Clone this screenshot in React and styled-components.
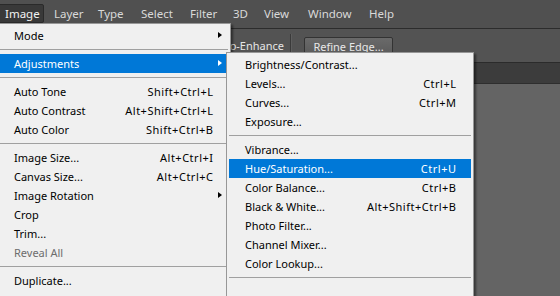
import React from 'react'
import styled, { createGlobalStyle } from 'styled-components'

const GlobalStyle = createGlobalStyle`
  html, body {
    margin: 0;
    padding: 0;
    background: #646464;
    overflow: hidden;
  }
  body {
    font-family: "Noto Sans", "Open Sans", "Liberation Sans", sans-serif;
  }
`

const Screen = styled.div`
  position: relative;
  width: 560px;
  height: 296px;
  overflow: hidden;
  display: flex;
  flex-direction: column;
  background: #646464;
`

const MenuBar = styled.div`
  display: flex;
  height: 28px;
  margin-left: -5px;
  background: #505050;
  border-bottom: 1px solid #2c2c2c;
  flex-shrink: 0;
`

const MenuTitle = styled.div`
  box-sizing: border-box;
  width: ${p => p.$w}px;
  height: 19px;
  margin-top: 4px;
  padding-left: 9px;
  display: flex;
  align-items: center;
  font-size: 11.5px;
  color: ${p => (p.$open ? '#f2f2f2' : '#d9d9d9')};
  background: ${p => (p.$open ? '#393939' : 'transparent')};
  border: 1px solid ${p => (p.$open ? '#2a2a2a' : 'transparent')};
  border-radius: 2px;
  white-space: nowrap;
`

const OptionsBar = styled.div`
  display: flex;
  align-items: center;
  height: 33px;
  background: #535353;
  border-bottom: 1px solid #2b2b2b;
  flex-shrink: 0;
`

const OptionGroup = styled.div`
  width: 284px;
  display: flex;
  justify-content: flex-end;
  align-items: center;
  gap: 5px;
  font-size: 11px;
  color: #e6e6e6;
`

const Check = styled.span`
  width: 11px;
  height: 11px;
  background: #e8e8e8;
  border: 1px solid #2e2e2e;
`

const Divider = styled.div`
  width: 1px;
  height: 24px;
  margin-left: 6px;
  background: #3a3a3a;
  box-shadow: 1px 0 0 #5e5e5e;
`

const ToolButton = styled.div`
  box-sizing: border-box;
  margin-left: 13px;
  margin-top: 1px;
  width: 89px;
  height: 19px;
  display: flex;
  align-items: center;
  justify-content: center;
  font-size: 11px;
  color: #e8e8e8;
  background: linear-gradient(#6a6a6a, #5a5a5a);
  border: 1px solid #333333;
  border-radius: 2px;
`

const TabStrip = styled.div`
  height: 20px;
  background: #3c3c3c;
  border-bottom: 1px solid #2e2e2e;
  flex-shrink: 0;
`

const Canvas = styled.div`
  flex: 1;
  background: #646464;
`

const Dropdown = styled.div`
  position: absolute;
  left: ${p => p.$left}px;
  top: ${p => p.$top}px;
  width: ${p => p.$width}px;
  box-sizing: border-box;
  padding: 2px 2px 40px 2px;
  background: #f0f0f0;
  border: 1px solid #979797;
  box-shadow: 2px 2px 2px rgba(0, 0, 0, 0.45);
  font-size: 11px;
`

const Item = styled.div`
  display: flex;
  align-items: center;
  height: 19px;
  padding: 0 6px 0 16px;
  white-space: nowrap;
  color: ${p => (p.$disabled ? '#6d6d6d' : p.$active ? '#ffffff' : '#000000')};
  background: ${p => (p.$active ? '#0078d7' : 'transparent')};
`

const Label = styled.span`
  flex: 1;
`

const Shortcut = styled.span`
  text-align: right;
  letter-spacing: 0.5px;
  margin-right: -0.5px;
`

const ArrowSlot = styled.span`
  width: 9px;
  display: flex;
  justify-content: flex-end;
`

const Arrow = styled.span`
  width: 0;
  height: 0;
  margin-top: -1px;
  border-top: 3.5px solid transparent;
  border-bottom: 3.5px solid transparent;
  border-left: 4px solid ${p => (p.$active ? '#ffffff' : '#000000')};
`

const Separator = styled.div`
  height: 9px;
  display: flex;
  align-items: center;
  &::after {
    content: '';
    flex: 1;
    height: 1px;
    background: #a0a0a0;
  }
`

const titles = [
  ['Image', 49, true],
  ['Layer', 44],
  ['Type', 43],
  ['Select', 49],
  ['Filter', 43],
  ['3D', 31],
  ['View', 44],
  ['Window', 61],
  ['Help', 50],
]

const imageMenu = [
  { label: 'Mode', sub: true },
  { sep: true },
  { label: 'Adjustments', sub: true, active: true },
  { sep: true },
  { label: 'Auto Tone', key: 'Shift+Ctrl+L' },
  { label: 'Auto Contrast', key: 'Alt+Shift+Ctrl+L' },
  { label: 'Auto Color', key: 'Shift+Ctrl+B' },
  { sep: true },
  { label: 'Image Size...', key: 'Alt+Ctrl+I' },
  { label: 'Canvas Size...', key: 'Alt+Ctrl+C' },
  { label: 'Image Rotation', sub: true },
  { label: 'Crop' },
  { label: 'Trim...' },
  { label: 'Reveal All', disabled: true },
  { sep: true },
  { label: 'Duplicate...' },
  { label: 'Apply Image...' },
]

const adjustMenu = [
  { label: 'Brightness/Contrast...' },
  { label: 'Levels...', key: 'Ctrl+L' },
  { label: 'Curves...', key: 'Ctrl+M' },
  { label: 'Exposure...' },
  { sep: true },
  { label: 'Vibrance...' },
  { label: 'Hue/Saturation...', key: 'Ctrl+U', active: true },
  { label: 'Color Balance...', key: 'Ctrl+B' },
  { label: 'Black & White...', key: 'Alt+Shift+Ctrl+B' },
  { label: 'Photo Filter...' },
  { label: 'Channel Mixer...' },
  { label: 'Color Lookup...' },
  { sep: true },
]

function MenuItems({ items }) {
  return items.map((it, i) =>
    it.sep ? (
      <Separator key={i} />
    ) : (
      <Item key={i} $active={it.active} $disabled={it.disabled}>
        <Label>{it.label}</Label>
        {it.key && <Shortcut>{it.key}</Shortcut>}
        <ArrowSlot>{it.sub && <Arrow $active={it.active} />}</ArrowSlot>
      </Item>
    )
  )
}

export default function App() {
  return (
    <Screen>
      <GlobalStyle />
      <MenuBar>
        {titles.map(([t, w, open]) => (
          <MenuTitle key={t} $w={w} $open={open}>
            {t}
          </MenuTitle>
        ))}
      </MenuBar>
      <OptionsBar>
        <OptionGroup>
          <Check />
          <span>Auto-Enhance</span>
        </OptionGroup>
        <Divider />
        <ToolButton>Refine Edge...</ToolButton>
      </OptionsBar>
      <TabStrip />
      <Canvas />
      <Dropdown $left={-5} $top={23} $width={236}>
        <MenuItems items={imageMenu} />
      </Dropdown>
      <Dropdown $left={226} $top={52} $width={248}>
        <MenuItems items={adjustMenu} />
      </Dropdown>
    </Screen>
  )
}
